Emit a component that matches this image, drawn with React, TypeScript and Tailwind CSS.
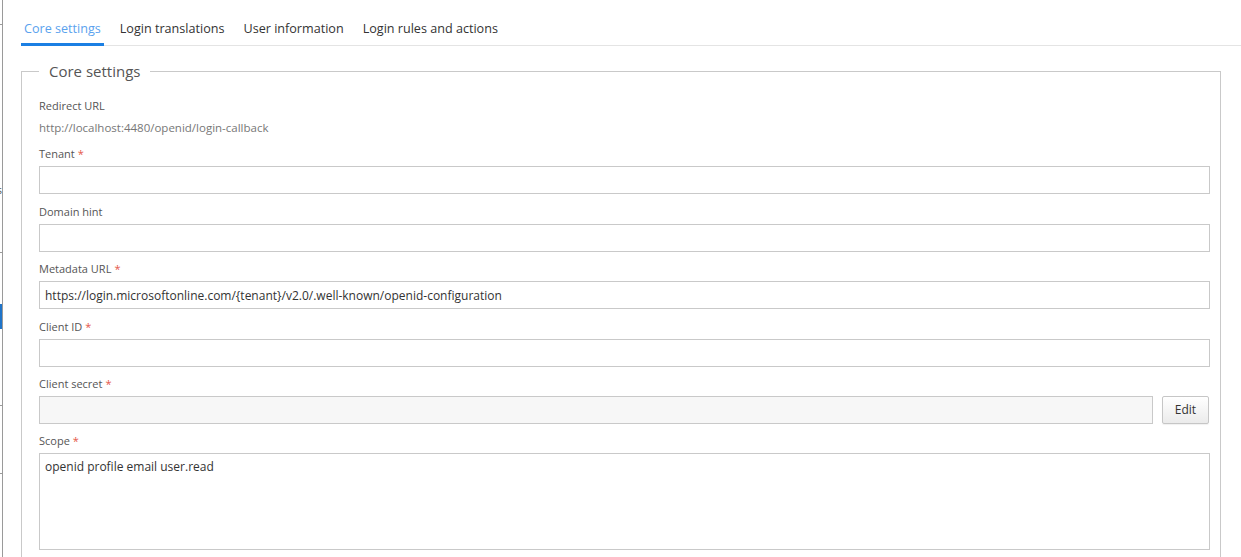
import React from 'react';

const FONT = "font-['Open_Sans',_'Noto_Sans',_sans-serif]";

const Req = () => <span className="ml-[3px] text-[#e5574a]">*</span>;

const Label: React.FC<{ text: string; required?: boolean }> = ({ text, required }) => (
    <div className="mb-[4px] text-[11px] leading-[16px] text-[#555]">
        {text}
        {required && <Req />}
    </div>
);

const inputCls =
    'block h-[28px] w-full border border-[#c9c9c9] px-[5px] text-[12px] leading-[26px] text-[#333] outline-none';

const Field: React.FC<{ label: string; required?: boolean; value?: string; gap: string }> = ({
    label,
    required,
    value,
    gap
}) => (
    <div className={gap}>
        <Label text={label} required={required} />
        <input className={`${inputCls} bg-white`} defaultValue={value} />
    </div>
);

const Sidebar = () => (
    <div className="flex w-[3px] shrink-0 flex-col overflow-hidden border-r border-[#9a9a9a]">
        <div className="h-[25px] shrink-0 border-b border-[#9a9a9a]" />
        <div className="flex h-[228px] shrink-0 flex-col border-b border-[#9a9a9a]">
            <div className="h-[157px]" />
            <div className="flex justify-end text-[11px] leading-[16px] text-[#555]">
                <span className="whitespace-nowrap">Settings</span>
            </div>
        </div>
        <div className="h-[51px] shrink-0" />
        <div className="h-[25px] shrink-0 bg-[#1f74c9]" />
        <div className="h-[77px] shrink-0 border-b border-[#9a9a9a]" />
        <div className="h-[68px] shrink-0 border-b border-[#9a9a9a]" />
        <div className="flex-1" />
    </div>
);

const tabs = ['Core settings', 'Login translations', 'User information', 'Login rules and actions'];

export default function App() {
    return (
        <div className={`flex min-h-[557px] bg-white ${FONT}`}>
            <Sidebar />
            <div className="min-w-0 flex-1 pl-[18px]">
                <div className="flex gap-[13px] border-b border-[#e4e4e4]">
                    {tabs.map((t, i) => (
                        <div
                            key={t}
                            className={
                                i === 0
                                    ? '-mb-px border-b-[3px] border-[#1b7fe3] px-[3px] pt-[19px] pb-[4px] text-[12.6px] leading-[20px] text-[#5aa2ee]'
                                    : '-mb-px border-b-[3px] border-transparent px-[3px] pt-[19px] pb-[4px] text-[12.6px] leading-[20px] text-[#333]'
                            }
                        >
                            {t}
                        </div>
                    ))}
                </div>

                <fieldset className="mt-[15px] mr-[20px] border border-[#c9c9c9] pr-[10px] pb-[20px] pl-[17px]">
                    <legend className="px-[10px] text-[15px] leading-[20px] text-[#555]">Core settings</legend>
                    <div className="pt-[17px]">
                        <div className="text-[11px] leading-[16px] text-[#555]">Redirect URL</div>
                        <div className="mt-[6px] mb-[10px] text-[11.5px] leading-[16px] text-[#777]">
                            http://localhost:4480/openid/login-callback
                        </div>

                        <Field label="Tenant" required gap="mb-[10px]" />
                        <Field label="Domain hint" gap="mb-[9px]" />
                        <Field
                            label="Metadata URL"
                            required
                            gap="mb-[10px]"
                            value="https://login.microsoftonline.com/{tenant}/v2.0/.well-known/openid-configuration"
                        />
                        <Field label="Client ID" required gap="mb-[9px]" />

                        <div className="mb-[9px]">
                            <Label text="Client secret" required />
                            <div className="flex items-center gap-[9px]">
                                <input className={`${inputCls} flex-1 bg-[#f7f7f7]`} disabled />
                                <button className="mr-[1px] h-[28px] w-[47px] rounded-[2px] border border-[#c6c6c6] bg-gradient-to-b from-white to-[#ebebeb] text-[12px] text-[#333] shadow-[0_1px_1px_rgba(0,0,0,0.06)]">
                                    Edit
                                </button>
                            </div>
                        </div>

                        <div>
                            <Label text="Scope" required />
                            <textarea
                                className="block h-[97px] w-full resize-none border border-[#c9c9c9] px-[5px] pt-[5px] text-[12px] leading-[16px] text-[#333] outline-none"
                                defaultValue="openid profile email user.read"
                            />
                        </div>
                    </div>
                </fieldset>
            </div>
        </div>
    );
}
